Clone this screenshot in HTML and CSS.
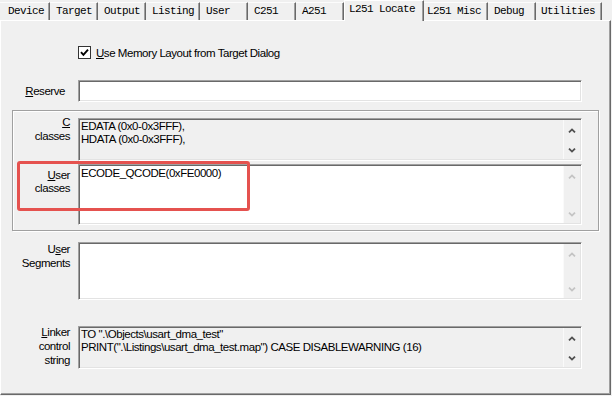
FILE: index.html
```html
<!DOCTYPE html>
<html>
  <head>
    <title>Options for Target - L251 Locate</title>
    <link rel="stylesheet" href="styles.css">
  </head>
  <body>
    <!-- tab strip -->
    <div class="tabs">
      <div class="tab first">Device</div>
      <div class="tab">Target</div>
      <div class="tab">Output</div>
      <div class="tab">Listing</div>
      <div class="tab">User</div>
      <div class="tab">C251</div>
      <div class="tab">A251</div>
      <div class="tab active">L251 Locate</div>
      <div class="tab misc">L251 Misc</div>
      <div class="tab">Debug</div>
      <div class="tab util">Utilities</div>
    </div>

    <div class="panel">
      <div class="check-row">
        <span class="checkbox">
          <svg width="9" height="9" viewBox="0 0 9 9"><path d="M1 4.2 L3.4 6.8 L8 1.6" fill="none" stroke="#000" stroke-width="1.9"/></svg>
        </span>
        <span><u>U</u>se Memory Layout from Target Dialog</span>
      </div>

      <div class="row reserve-row">
        <div class="label reserve"><u>R</u>eserve</div>
        <div class="field single"></div>
      </div>

      <div class="group">
        <div class="row">
          <div class="label c-label"><u>C</u><br>classes</div>
          <div class="field grey short">
            <div class="text">EDATA (0x0-0x3FFF),<br>HDATA (0x0-0x3FFF),</div>
            <div class="scroll">
              <svg width="8" height="5" viewBox="0 0 8 5"><polyline points="1,4.4 4,1.4 7,4.4"/></svg>
              <svg width="8" height="5" viewBox="0 0 8 5"><polyline points="1,0.6 4,3.6 7,0.6"/></svg>
            </div>
          </div>
        </div>
        <div class="row user-row">
          <div class="label u-label"><u>U</u>ser<br>classes</div>
          <div class="field tall">
            <div class="text">ECODE_QCODE(0xFE0000)</div>
            <div class="scroll off">
              <svg width="8" height="5" viewBox="0 0 8 5"><polyline points="1,4.4 4,1.4 7,4.4"/></svg>
              <svg width="8" height="5" viewBox="0 0 8 5"><polyline points="1,0.6 4,3.6 7,0.6"/></svg>
            </div>
          </div>
        </div>
        <!-- red highlight from the screenshot -->
        <div class="mark"></div>
      </div>

      <div class="row seg-row">
        <div class="label seg-label">U<u>s</u>er<br>Segments</div>
        <div class="field seg">
          <div class="text"></div>
          <div class="scroll off">
            <svg width="8" height="5" viewBox="0 0 8 5"><polyline points="1,4.4 4,1.4 7,4.4"/></svg>
            <svg width="8" height="5" viewBox="0 0 8 5"><polyline points="1,0.6 4,3.6 7,0.6"/></svg>
          </div>
        </div>
      </div>

      <div class="row linker-row">
        <div class="label linker-label"><u>L</u>inker<br>control<br>string</div>
        <div class="field grey short">
          <div class="text">TO ".\Objects\usart_dma_test"<br>PRINT(".\Listings\usart_dma_test.map") CASE DISABLEWARNING (16)</div>
          <div class="scroll">
            <svg width="8" height="5" viewBox="0 0 8 5"><polyline points="1,4.4 4,1.4 7,4.4"/></svg>
            <svg width="8" height="5" viewBox="0 0 8 5"><polyline points="1,0.6 4,3.6 7,0.6"/></svg>
          </div>
        </div>
      </div>
    </div>
  </body>
</html>
```

FILE: styles.css
```css
* {
  margin: 0;
  padding: 0;
  box-sizing: border-box;
}
body {
  width: 612px;
  height: 396px;
  overflow: hidden;
  background: #f0f0f0;
  font-family: "Liberation Sans", Arial, sans-serif;
  font-size: 11.5px;
  letter-spacing: -0.45px;
  color: #000;
}
u {
  text-decoration-thickness: 1px;
  text-underline-offset: 1px;
}

/* tabs */
.tabs {
  display: flex;
  align-items: flex-end;
  height: 20px;
  position: relative;
  z-index: 1;
}
.tab {
  height: 18px;
  min-width: 48px;
  padding: 0 5px 0 6px;
  border-top: 1px solid #fcfcfc;
  border-right: 1px solid #696969;
  box-shadow: inset -1px 0 #a0a0a0;
  font-family: "Liberation Mono", monospace;
  font-size: 11px;
  letter-spacing: -0.6px;
  line-height: 17px;
  white-space: nowrap;
}
.tab.first {
  padding-left: 8px;
}
.tab.active {
  height: 21px;
  margin-bottom: -1px;
  padding: 0 8px 0 4px;
  border-left: 1px solid #fff;
  border-top: 1px solid #fff;
  background: #f0f0f0;
}
.tab.misc {
  padding: 0 6px 0 3px;
}
.tab.util {
  padding: 0 6px 0 5px;
}

/* panel */
.panel {
  width: 611px;
  height: 375px;
  padding-top: 25px;
  border-top: 1px solid #fff;
  border-left: 1px solid #fff;
  border-right: 1px solid #696969;
  border-bottom: 1px solid #696969;
  box-shadow: inset -1px -1px #a0a0a0;
}
.check-row {
  display: flex;
  align-items: center;
  gap: 5px;
  height: 13px;
  padding-left: 77px;
}
.checkbox {
  display: flex;
  align-items: center;
  justify-content: center;
  width: 13px;
  height: 13px;
  border: 1px solid #333;
  background: #fff;
}

.row {
  display: flex;
}
.label {
  width: 70px;
  margin-right: 7px;
  padding-right: 1px;
  text-align: right;
  line-height: 13px;
  white-space: nowrap;
}
.reserve-row {
  margin-top: 21px;
  align-items: center;
}
.label.reserve {
  padding-right: 6px;
}

.field {
  display: flex;
  width: 504px;
  background: #fff;
  border: 1px solid;
  border-color: #a0a0a0 #fff #fff #a0a0a0;
  box-shadow: inset 1px 1px #696969, inset -1px -1px #e3e3e3;
}
.field.single {
  height: 22px;
}
.field.grey {
  background: #f0f0f0;
}
.field.short {
  height: 43px;
}
.field.tall {
  height: 61px;
}
.field.seg {
  height: 58px;
}
.text {
  flex: 1;
  padding: 1px 0 0 2px;
  line-height: 13px;
  white-space: nowrap;
}
.field.tall .text {
  padding-top: 2px;
}
.scroll {
  width: 17px;
  margin: 1px 1px 1px 0;
  display: flex;
  flex-direction: column;
  justify-content: space-between;
  align-items: center;
  padding: 8px 0 6px;
  background: #f0f0f0;
  border-left: 1px solid #fafafa;
}
.scroll polyline {
  fill: none;
  stroke: #505050;
  stroke-width: 1.8;
}
.scroll.off polyline {
  stroke: #c4c4c4;
}

/* group box */
.group {
  position: relative;
  width: 587px;
  height: 121px;
  margin: 8px 0 0 11px;
  padding-top: 7px;
  border: 1px solid #a0a0a0;
  box-shadow: inset 1px 1px #fff, 1px 1px #fff;
}
.group .label {
  width: 58px;
}
.label.c-label {
  margin-top: -3px;
  line-height: 14px;
}
.user-row {
  margin-top: 3px;
}
.label.u-label {
  margin-top: 5px;
}
.mark {
  position: absolute;
  left: 4px;
  top: 50px;
  width: 233px;
  height: 50px;
  border: 3px solid #e5524f;
  border-radius: 3px;
}

.seg-row {
  margin-top: 11px;
}
.label.seg-label {
  margin-top: 0;
  line-height: 14px;
}
.linker-row {
  margin-top: 26px;
}
.label.linker-label {
  margin-top: -1px;
  line-height: 14px;
}
```
